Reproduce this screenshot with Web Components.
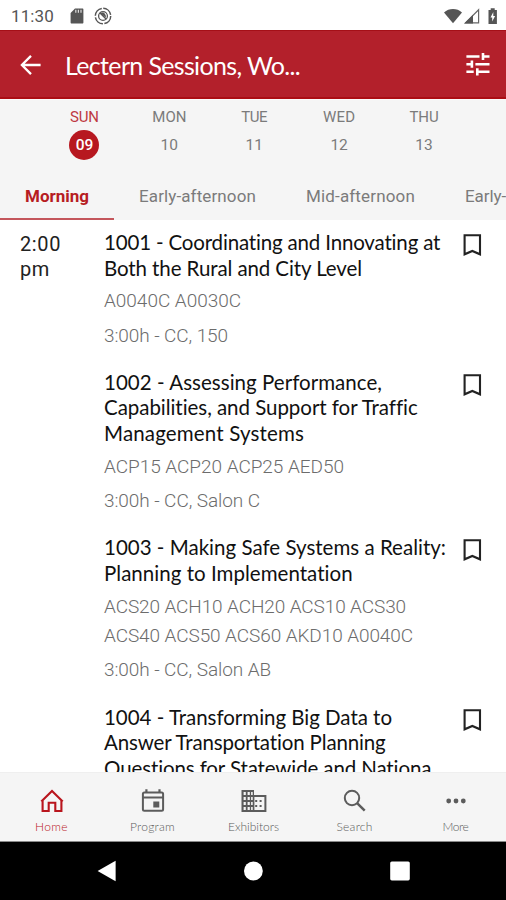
<!DOCTYPE html>
<html lang="en">
<head>
    <meta charset="UTF-8">
    <title>Lectern Sessions, Workshops</title>
    <meta name="viewport" content="width=device-width">
    <style>
        html, body {
            margin: 0;
            height: 100%;
        }

        body {
            background: #fff;
            overflow: hidden;
        }
    </style>
</head>
<body>
<app-screen>
    <status-bar slot="top" time="11:30"></status-bar>
    <app-header slot="top"><fit-text width="235">Lectern Sessions, Wo...</fit-text></app-header>
    <day-picker slot="top">
        <day-item label="SUN" width="29" active>09</day-item>
        <day-item label="MON" width="34">10</day-item>
        <day-item label="TUE" width="26">11</day-item>
        <day-item label="WED" width="32">12</day-item>
        <day-item label="THU" width="29">13</day-item>
    </day-picker>
    <tab-strip slot="top">
        <tab-item active><fit-text width="64">Morning</fit-text></tab-item>
        <tab-item><fit-text width="117">Early-afternoon</fit-text></tab-item>
        <tab-item><fit-text width="109">Mid-afternoon</fit-text></tab-item>
        <tab-item><fit-text width="41">Early-</fit-text></tab-item>
    </tab-strip>

    <time-group>
        <span slot="time"><fit-text width="41">2:00</fit-text><br><fit-text width="30">pm</fit-text></span>
        <session-card>
            <fit-text slot="title" width="337">1001 - Coordinating and Innovating at</fit-text>
            <fit-text slot="title" width="258">Both the Rural and City Level</fit-text>
            <fit-text slot="codes" width="137">A0040C A0030C</fit-text>
            <fit-text slot="place" width="124">3:00h - CC, 150</fit-text>
        </session-card>
        <session-card>
            <fit-text slot="title" width="278">1002 - Assessing Performance,</fit-text>
            <fit-text slot="title" width="313">Capabilities, and Support for Traffic</fit-text>
            <fit-text slot="title" width="200">Management Systems</fit-text>
            <fit-text slot="codes" width="240">ACP15 ACP20 ACP25 AED50</fit-text>
            <fit-text slot="place" width="156">3:00h - CC, Salon C</fit-text>
        </session-card>
        <session-card>
            <fit-text slot="title" width="342">1003 - Making Safe Systems a Reality:</fit-text>
            <fit-text slot="title" width="249">Planning to Implementation</fit-text>
            <fit-text slot="codes" width="302">ACS20 ACH10 ACH20 ACS10 ACS30</fit-text>
            <fit-text slot="codes" width="309">ACS40 ACS50 ACS60 AKD10 A0040C</fit-text>
            <fit-text slot="place" width="167">3:00h - CC, Salon AB</fit-text>
        </session-card>
        <session-card>
            <fit-text slot="title" width="288">1004 - Transforming Big Data to</fit-text>
            <fit-text slot="title" width="282">Answer Transportation Planning</fit-text>
            <fit-text slot="title" width="328">Questions for Statewide and Nationa</fit-text>
        </session-card>
    </time-group>

    <bottom-nav slot="bottom">
        <nav-item icon="home" active><fit-text width="33">Home</fit-text></nav-item>
        <nav-item icon="program"><fit-text width="45">Program</fit-text></nav-item>
        <nav-item icon="exhibitors"><fit-text width="51">Exhibitors</fit-text></nav-item>
        <nav-item icon="search"><fit-text width="36">Search</fit-text></nav-item>
        <nav-item icon="more"><fit-text width="26">More</fit-text></nav-item>
    </bottom-nav>
    <system-nav slot="bottom"></system-nav>
</app-screen>

<script>
    // Registers an element whose shadow root is made from a piece of markup
    function define(name, render) {
        customElements.define(name, class extends HTMLElement {
            constructor() {
                super();
                const tmpl = document.createElement('template');
                tmpl.innerHTML = render(this);
                this.attachShadow({mode: 'open'}).appendChild(tmpl.content.cloneNode(true));
            }
        });
    }

    // All icons share a 30x30 box
    const icons = {
        home: `<path fill="none" stroke="currentColor" stroke-width="2.1" d="M4.3 15.6 15 5l10.7 10.6M5.6 14.4V25h6.1v-8.2h6.6V25h6.1V14.4"/>`,
        program: `<rect x="4.9" y="6.4" width="20.2" height="18.4" rx="1.5" fill="none" stroke="currentColor" stroke-width="2"/>
            <path fill="currentColor" d="M4.9 10.6h20.2v1.9H4.9zM7.3 3.2h2.2V7H7.3zM20.4 3.2h2.2V7h-2.2zM15.3 15.6h6v5.8h-6z"/>`,
        exhibitors: `<path fill="currentColor" fill-rule="evenodd" d="M2.5 4H15v4.9h12.4V26H2.5zM4.6 6v3h2.2V6zM8.6 6v3h2.2V6zM12.1 6v3h1.6V6zM4.6 11v3h2.2v-3zM8.6 11v3h2.2v-3zM12.1 11v3h1.6v-3zM4.6 16v3h2.2v-3zM8.6 16v3h2.2v-3zM12.1 16v3h1.6v-3zM4.6 21v3h2.2v-3zM8.6 21v3h2.2v-3zM12.1 21v3h1.6v-3zM15.4 11v13h10V11z"/>
            <path fill="currentColor" d="M16.2 14h2v2h-2zM20.6 14h2v2h-2zM16.2 19h2v2h-2zM20.6 19h2v2h-2z"/>`,
        search: `<circle cx="12" cy="12" r="7.2" fill="none" stroke="currentColor" stroke-width="2"/>
            <path stroke="currentColor" stroke-width="2.5" d="m17.1 17.1 7.6 7.6"/>`,
        more: `<g fill="currentColor"><circle cx="7.7" cy="15" r="2.4"/><circle cx="15" cy="15" r="2.4"/><circle cx="22.3" cy="15" r="2.4"/></g>`
    };

    define('app-screen', () => `
        <style>
            :host {
                display: flex;
                flex-direction: column;
                height: 900px;
                width: 506px;
                overflow: hidden;
                font-family: Roboto, "Liberation Sans", sans-serif;
                color: #7b7b7b;
            }
            main { flex: 1; min-height: 0; overflow: hidden; background: #fff; }
        </style>
        <slot name="top"></slot>
        <main><slot></slot></main>
        <slot name="bottom"></slot>`);

    define('status-bar', el => `
        <style>
            :host {
                display: flex;
                align-items: center;
                height: 30px;
                flex: none;
                box-sizing: border-box;
                padding: 1px 8px 0 11px;
                color: #555;
                font-size: 17px;
            }
            svg { display: block; }
            .sd { margin-left: 16px; }
            .sync { margin-left: 10px; }
            .right { margin-left: auto; display: flex; align-items: center; }
        </style>
        <fit-text width="43">${el.getAttribute('time')}</fit-text>
        <svg class="sd" width="14" height="16" viewBox="0 0 14 16">
            <path fill="#555" d="M5 .5h7.4c.6 0 1 .4 1 1v13c0 .6-.4 1-1 1H1.6c-.6 0-1-.4-1-1V5z"/>
            <path fill="#ddd" d="M5.2 1.8h1.2v3H5.2zM7.8 1.8H9v3H7.8zM10.4 1.8h1.2v3h-1.2z"/>
        </svg>
        <svg class="sync" width="18" height="18" viewBox="0 0 18 18">
            <circle cx="9" cy="9" r="7.7" fill="none" stroke="#555" stroke-width="1.5" stroke-dasharray="10.6 1.5"/>
            <circle cx="9" cy="9" r="4.4" fill="none" stroke="#555" stroke-width="1.3"/>
            <path fill="#555" d="M6.2 6.2c2.8-1.8 6.2.3 5.6 4.6z"/>
            <path stroke="#555" stroke-width="1.3" d="m6 6 6 6"/>
        </svg>
        <div class="right">
            <svg width="54" height="18" viewBox="0 0 54 18">
                <path fill="#555" d="M0 5.4C5 .9 13 .9 18 5.4L9 16.3z"/>
                <path fill="none" stroke="#666" stroke-width="1.2" d="M21.5 15.9 34.6 2.8v13.1z"/>
                <path fill="#555" d="M20.2 16.5 29 7.8v8.7z"/>
                <path fill="#555" d="M46.7 1.3h4v1.6h2.2v14h-8.4v-14h2.2z"/>
                <path fill="#fff" d="m49.3 5-2.8 5.6h1.7v4l2.9-5.5h-1.8z"/>
            </svg>
        </div>`);

    define('app-header', () => `
        <style>
            :host {
                display: flex;
                align-items: center;
                height: 69px;
                flex: none;
                box-sizing: border-box;
                padding: 1px 15px 0 20px;
                background: #b3202b;
                border-top: 1px solid #a50f17;
                border-bottom: 2px solid #ab0d14;
                color: #fff;
                font: 25px Lato, sans-serif;
            }
            ::slotted(fit-text) { margin-left: 23px; }
            svg { display: block; }
            .tune { margin-left: auto; }
        </style>
        <svg width="22" height="20" viewBox="0 0 22 20">
            <path fill="none" stroke="#fff" stroke-width="2.3" d="M20.6 10H2.2M11 .9 1.9 10l9.1 9.1"/>
        </svg>
        <slot></slot>
        <svg class="tune" width="26" height="26" viewBox="0 0 26 26">
            <path fill="#fff" d="M1.4 3.2h13.1v2.6H1.4zM16.7 1h2.6v2.2h5.2v2.6h-5.2V8h-2.6zM1.4 11h4.2V8.6h2.6v7.2H5.6v-2.4H1.4zM10.4 11h14.1v2.5H10.4zM1.4 18.5h7.3v2.6H1.4zM11 16.3h2.6v2.2h10.9v2.6H13.6v2.5H11z"/>
        </svg>`);

    define('day-picker', () => `
        <style>
            :host {
                display: grid;
                grid-template-columns: repeat(5, 84.9px);
                justify-content: start;
                padding-left: 42px;
                height: 75px;
                flex: none;
                background: #f5f5f5;
                border-top: 1px solid #fbfbfb;
                box-sizing: border-box;
            }
        </style>
        <slot></slot>`);

    define('day-item', el => `
        <style>
            :host {
                display: flex;
                flex-direction: column;
                align-items: center;
                padding-top: 8px;
                font-size: 15px;
                line-height: 18px;
            }
            :host([active]) { color: #be3a42; }
            .date {
                width: 30px;
                line-height: 30px;
                margin-top: 4px;
                border-radius: 50%;
                text-align: center;
                font-size: 15.5px;
            }
            :host([active]) .date { background: #b71820; color: #fff; font-weight: 500; }
        </style>
        <fit-text width="${el.getAttribute('width')}">${el.getAttribute('label')}</fit-text>
        <div class="date"><slot></slot></div>`);

    define('tab-strip', () => `
        <style>
            :host {
                display: flex;
                height: 46px;
                flex: none;
                background: #f5f5f5;
                overflow: hidden;
            }
        </style>
        <slot></slot>`);

    define('tab-item', () => `
        <style>
            :host {
                display: flex;
                flex: none;
                align-items: center;
                box-sizing: border-box;
                padding: 0 25px;
                font-size: 17px;
                border-bottom: 2px solid transparent;
            }
            :host([active]) { color: #b71c22; font-weight: 700; border-color: #c4565c; }
        </style>
        <slot></slot>`);

    define('time-group', () => `
        <style>
            :host { display: flex; padding: 10px 20px 0; }
            .time {
                width: 84px;
                flex: none;
                padding-top: 2px;
                font-size: 20px;
                line-height: 25.4px;
                color: #222;
            }
            .list { flex: 1; min-width: 0; }
        </style>
        <div class="time"><slot name="time"></slot></div>
        <div class="list"><slot></slot></div>`);

    define('session-card', () => `
        <style>
            :host { display: flex; margin-bottom: 19.6px; }
            .body { flex: 1; min-width: 0; }
            .title {
                display: flex;
                flex-direction: column;
                font: 20.5px/25.7px Lato, sans-serif;
                color: #111;
            }
            .row {
                display: flex;
                flex-direction: column;
                margin-top: 4.9px;
                font-size: 19px;
                line-height: 29.5px;
                font-weight: 300;
                color: #6c6c6c;
            }
            svg { flex: none; margin: 4px 4px 0 0; }
        </style>
        <div class="body">
            <div class="title"><slot name="title"></slot></div>
            <div class="row"><slot name="codes"></slot></div>
            <div class="row"><slot name="place"></slot></div>
        </div>
        <svg width="20" height="23" viewBox="0 0 20 23">
            <path fill="none" stroke="#222" stroke-width="2.1" d="M2.6 1.3h15.4v19L10.3 17l-7.7 3.3z"/>
        </svg>`);

    define('bottom-nav', () => `
        <style>
            :host {
                display: grid;
                grid-template-columns: repeat(5, 1fr);
                height: 70px;
                flex: none;
                box-sizing: border-box;
                padding-left: 1px;
                background: #f5f5f5;
                border-top: 1px solid #efefef;
                border-bottom: 1px solid #8a8a8a;
            }
        </style>
        <slot></slot>`);

    define('nav-item', el => `
        <style>
            :host {
                display: flex;
                flex-direction: column;
                align-items: center;
                padding-top: 13px;
                color: #5c5c5c;
                font: 300 12px/16px Lato, sans-serif;
            }
            :host([active]) { color: #b9151d; }
            svg { display: block; margin-bottom: 3px; }
        </style>
        <svg width="30" height="30" viewBox="0 0 30 30">${icons[el.getAttribute('icon')]}</svg>
        <slot></slot>`);

    define('system-nav', () => `
        <style>
            :host {
                display: flex;
                align-items: center;
                justify-content: center;
                gap: 126.5px;
                height: 58px;
                flex: none;
                background: #000;
            }
            svg { display: block; }
        </style>
        <svg width="20" height="22" viewBox="0 0 20 22"><path fill="#fff" d="M18.6.8v20.4L.6 11z"/></svg>
        <svg width="20" height="20" viewBox="0 0 20 20"><circle cx="10.4" cy="10" r="9.4" fill="#fff"/></svg>
        <svg width="20" height="20" viewBox="0 0 20 20"><rect x=".2" y=".4" width="19.6" height="19" rx="1.6" fill="#fff"/></svg>`);

    // Tracks a single line of text so that it fills the given width.
    // Defined last, when the surrounding fonts already apply.
    customElements.define('fit-text', class extends HTMLElement {
        constructor() {
            super();
            this.attachShadow({mode: 'open'}).innerHTML = `
                <style>
                    :host { display: inline-block; white-space: nowrap; vertical-align: top; }
                    span { display: inline-block; }
                </style>
                <span><slot></slot></span>`;
        }

        connectedCallback() {
            const span = this.shadowRoot.querySelector('span');
            const width = Number(this.getAttribute('width'));
            const free = width - span.getBoundingClientRect().width;
            span.style.letterSpacing = free / this.textContent.length + 'px';
        }
    });
</script>
</body>
</html>
